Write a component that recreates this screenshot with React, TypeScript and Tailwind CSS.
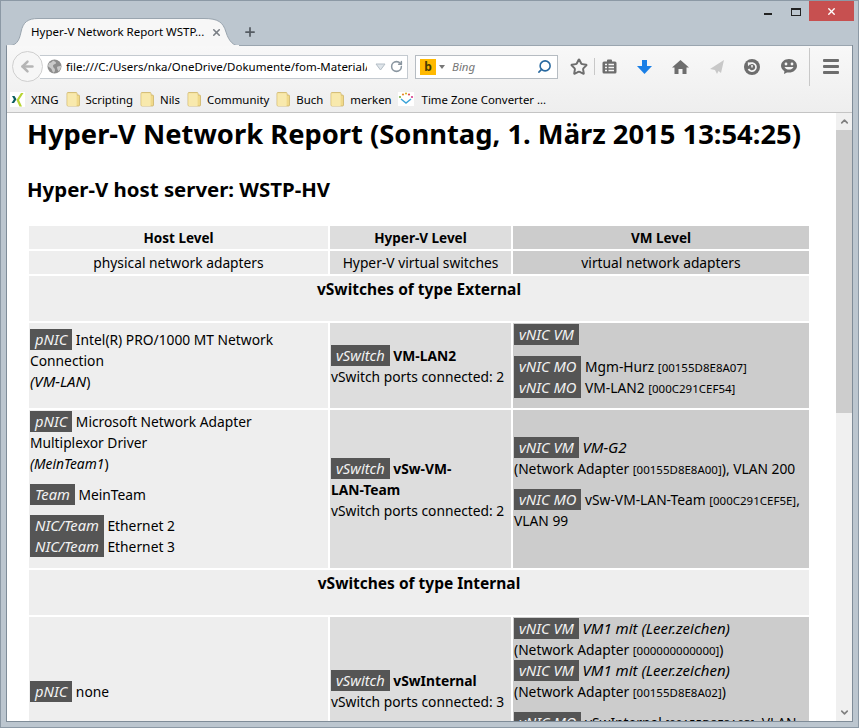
import { Plus, X, ArrowLeft, RotateCw, Search, Star, ChevronDown } from 'lucide-react';
import type { ReactNode } from 'react';

function Tag({ children }: { children: ReactNode }) {
  return <span className="inline-block h-[21px] bg-[#555555] px-[5px] align-top text-[14.7px] leading-[21px] italic text-[#f2f2f2]">{children}</span>;
}

function Mac({ children }: { children: ReactNode }) {
  return <span className="text-[11.5px] leading-none">[{children}]</span>;
}

function VmName({ children }: { children: ReactNode }) {
  return <i className="text-[15px] leading-none">{children}</i>;
}

function Folder() {
  return (
    <svg width="14" height="15" viewBox="0 0 14 15" className="shrink-0">
      <path d="M1 1.5a1 1 0 0 1 1-1h8a1 1 0 0 1 1 1v1.5h1.5a1 1 0 0 1 1 1v9a1 1 0 0 1-1 1H2a1 1 0 0 1-1-1z" fill="#f0d98a" stroke="#c9ad5c" strokeWidth="0.7" />
      <path d="M1.4 1.2h9.2v12.9H2.4a1 1 0 0 1-1-1z" fill="#f8e9ad" />
    </svg>
  );
}

function Bookmark({ label }: { label: string }) {
  return (
    <div className="flex items-center gap-[6px]">
      <Folder />
      <span>{label}</span>
    </div>
  );
}

export default function App() {
  return (
    <div className="flex h-[728px] w-[859px] flex-col overflow-hidden border border-[#8c99a5] bg-[#bcc6cf] px-[5px] pb-[5px] font-['Noto_Sans',sans-serif] text-black">
      {/* title bar + tabs */}
      <div className="-mx-[1px] flex h-[44px] shrink-0 flex-col">
        <div className="flex h-[20px] items-start justify-end">
          <div className="mr-[19px] mt-[12px] h-[2px] w-[8px] bg-[#222]" />
          <div className="mr-[8px] mt-[7px] h-[8px] w-[10px] border border-t-2 border-[#222]" />
          <div className="flex h-[20px] w-[45px] items-center justify-center bg-[#c75050]">
            <X size={11} strokeWidth={3} className="text-white" />
          </div>
        </div>
        <div className="flex h-[24px] items-end">
          <div className="relative z-10 -mb-[1px] ml-[1px] flex h-[28px] w-[234px] items-center pl-[25px] text-[11.5px]">
            <svg width="234" height="28" viewBox="0 0 234 28" className="absolute left-0 top-0">
              <path d="M0 28C10 28 13 24 15 14C17 4 22 0.5 32 0.5H198C212 0.5 217 4 220 14C223 24 228 28 234 28Z" fill="#f7f7f7" stroke="#9aa5af" />
              <path d="M1 28H233" stroke="#f7f7f7" strokeWidth="2" />
            </svg>
            <span className="relative w-[180px] whitespace-nowrap">Hyper-V Network Report WSTP...</span>
            <X size={11} strokeWidth={3.5} className="relative text-[#7a7f85]" />
          </div>
          <Plus size={14} strokeWidth={3} className="mb-[6px] ml-[3px] text-[#555c63]" />
        </div>
      </div>

      <div className="flex min-h-0 flex-1 flex-col border-x border-b border-[#7f8c98]">
        <div className="shrink-0 border-t border-[#9aa5af] bg-linear-to-b from-[#f8f8f8] to-[#eeeeee]">
          {/* nav bar */}
          <div className="flex h-[41px] items-center pl-[5px]">
            <div className="z-10 flex h-[31px] w-[31px] shrink-0 items-center justify-center rounded-full border border-[#cfcfcf] bg-[#f6f6f6]">
              <ArrowLeft size={17} strokeWidth={3.5} className="text-[#b5b5b5]" />
            </div>
            <div className="-ml-[3px] flex h-[24px] w-[368px] shrink-0 items-center border border-l-0 border-[#c4cad0] bg-white pl-[7px] text-[11.5px]">
              <svg width="15" height="15" viewBox="0 0 15 15" className="shrink-0">
                <circle cx="7.5" cy="7.5" r="7" fill="#8d8d8d" />
                <path d="M2 4c2 0 3-1 4-2.500c1 1 3 1 3 2.500s-3 1-3 3 2 2 2 4-1 2.500-2 2.500c-1-2-1-3-2-4S1.500 8 1 7z" fill="#c9c9c9" />
                <path d="M10 8c1-1 3-1 4-1 0 2-1 4-2.500 5.500C11 11 10 10 10 8z" fill="#c9c9c9" />
              </svg>
              <span className="ml-[4px] w-[301px] shrink-0 overflow-hidden whitespace-nowrap">file:///C:/Users/nka/OneDrive/Dokumente/fom-Material/</span>
              <svg width="11" height="8" viewBox="0 0 11 8" className="ml-[8px] shrink-0">
                <path d="M1 1h9L5.500 7z" fill="#dfe5ea" stroke="#b4bec6" />
              </svg>
              <RotateCw size={13} strokeWidth={2.8} className="ml-[4px] shrink-0 text-[#8a96a0]" />
            </div>
            <div className="ml-[7px] flex h-[24px] w-[143px] shrink-0 items-center border border-[#b6bcc2] bg-white pl-[4px] pr-[5px] text-[11.5px]">
              <div className="flex h-[16px] w-[16px] items-center justify-center bg-[#ffb900] text-[12px] leading-none font-bold text-[#4a3b00]">b</div>
              <svg width="6" height="4" viewBox="0 0 6 4" className="ml-[3px]">
                <path d="M0 0h6L3 4z" fill="#777777" />
              </svg>
              <span className="ml-[7px] flex-1 italic text-[#777]">Bing</span>
              <Search size={15} strokeWidth={2.5} className="-scale-x-100 text-[#27689f]" />
            </div>
            <Star size={18} strokeWidth={2.6} className="ml-[12px] shrink-0 text-[#6d6d6d]" />
            <div className="ml-[6px] h-[17px] w-px shrink-0 bg-[#c8c8c8]" />
            <svg width="15" height="15" viewBox="0 0 15 15" className="ml-[7px] shrink-0">
              <path d="M2 2.500h3V1.500a1 1 0 0 1 1-1h3a1 1 0 0 1 1 1v1h3a1.500 1.500 0 0 1 1.500 1.500v9A1.500 1.500 0 0 1 13 14.500H2A1.500 1.500 0 0 1 .5 13V4A1.500 1.500 0 0 1 2 2.500z" fill="#6d6d6d" />
              <path d="M3 5.500h2M6.500 5.500h5.500M3 8.500h2M6.500 8.500h5.500M3 11.500h2M6.500 11.500h5.500" stroke="#f5f5f5" strokeWidth="1.3" />
            </svg>
            <svg width="15" height="14" viewBox="0 0 15 14" className="ml-[20px] shrink-0">
              <path d="M5 0h5v6h5l-7.500 8L0 6h5z" fill="#1a7fe6" />
            </svg>
            <svg width="17" height="14" viewBox="0 0 17 14" className="ml-[20px] shrink-0">
              <path d="M8.500 0L17 7.500H14.500V14H10.500V9H6.500V14H2.500V7.500H0Z" fill="#6d6d6d" />
            </svg>
            <svg width="14" height="14" viewBox="0 0 14 14" className="ml-[21px] shrink-0">
              <path d="M14 0L0 9L5 10L7 14L8.500 11L11 13Z" fill="#c8c8c8" />
            </svg>
            <svg width="16" height="16" viewBox="0 0 16 16" className="ml-[20px] shrink-0">
              <circle cx="8" cy="8" r="8" fill="#6d6d6d" />
              <path d="M5.500 5A4 4 0 1 1 4.500 10" fill="none" stroke="#f5f5f5" strokeWidth="1.700" />
              <path d="M3.800 3.200L7.500 3.800L4 7.200Z" fill="#f5f5f5" />
              <path d="M8 6v2.500" stroke="#f5f5f5" strokeWidth="1.500" />
            </svg>
            <svg width="16" height="15" viewBox="0 0 16 15" className="ml-[21px] shrink-0">
              <path d="M8 0c4.400 0 8 2.900 8 6.800s-3.600 6.800-8 6.800c-.7 0-1.400-.1-2-.2L3 15l.4-2.800C1.300 11 0 9 0 6.800 0 2.900 3.600 0 8 0z" fill="#6d6d6d" />
              <circle cx="5" cy="5" r="1.400" fill="#f5f5f5" />
              <circle cx="11" cy="5" r="1.400" fill="#f5f5f5" />
              <path d="M3.500 8c1 1.800 2.600 2.600 4.500 2.600S11.500 9.800 12.500 8z" fill="#f5f5f5" />
            </svg>
            <div className="ml-[12px] h-[38px] w-px shrink-0 bg-[#c8c8c8]" />
            <div className="ml-[13px] flex shrink-0 flex-col gap-[3px]">
              <div className="h-[3px] w-[16px] rounded-[1px] bg-[#6d6d6d]" />
              <div className="h-[3px] w-[16px] rounded-[1px] bg-[#6d6d6d]" />
              <div className="h-[3px] w-[16px] rounded-[1px] bg-[#6d6d6d]" />
            </div>
          </div>

          {/* bookmarks */}
          <div className="flex h-[26px] items-center gap-[7px] border-b border-[#c4c4c4] pl-[3px] text-[11.4px]">
            <div className="flex items-center gap-[6px]">
              <svg width="15" height="15" viewBox="0 0 15 15" className="shrink-0">
                <rect width="15" height="15" fill="#ffffff" />
                <path d="M2 4h2.500l2 3.200L4 11H1.500l2.400-3.800z" fill="#0a5d5e" />
                <path d="M11 1h2.500L9 8l3 6.500H9.500L6.500 8z" fill="#b7d433" />
              </svg>
              <span>XING</span>
            </div>
            <Bookmark label="Scripting" />
            <Bookmark label="Nils" />
            <Bookmark label="Community" />
            <Bookmark label="Buch" />
            <Bookmark label="merken" />
            <div className="-ml-[1px] flex items-center gap-[8px]">
              <svg width="16" height="14" viewBox="0 0 16 14" className="shrink-0">
                <rect width="16" height="14" fill="#ffffff" />
                <path d="M3 7l5 4 5-4" fill="none" stroke="#3aa3d8" strokeWidth="1.500" />
                <circle cx="2" cy="5" r="1.100" fill="#7cb342" />
                <circle cx="5" cy="2.500" r="1.100" fill="#e8862c" />
                <circle cx="8" cy="1.500" r="1.100" fill="#d8b52c" />
                <circle cx="11" cy="2.500" r="1.100" fill="#e05050" />
                <circle cx="14" cy="5" r="1.100" fill="#d83c8c" />
              </svg>
              <span>Time Zone Converter ...</span>
            </div>
          </div>
        </div>

        {/* page */}
        <div className="flex min-h-0 flex-1 bg-white">
          <div className="min-w-0 flex-1 overflow-hidden pl-[20px]">
            <h1 className="mt-[2px] whitespace-nowrap text-[27.35px] leading-[38px] font-bold">Hyper-V Network Report (Sonntag, 1. März 2015 13:54:25)</h1>
            <h2 className="mt-[23px] whitespace-nowrap text-[20.4px] leading-[27px] font-bold">Hyper-V host server: WSTP-HV</h2>
            <div className="ml-[2px] mt-[23px] grid w-[780px] grid-cols-[299px_181px_296px] gap-[2px] text-[13.8px] leading-[21px]">
              <div className="flex h-[23px] items-center justify-center bg-[#eeeeee] pt-[1px] text-[13.5px] font-bold">Host Level</div>
              <div className="flex h-[23px] items-center justify-center bg-[#dddddd] pt-[1px] text-[13.5px] font-bold">Hyper-V Level</div>
              <div className="flex h-[23px] items-center justify-center bg-[#cccccc] pt-[1px] text-[13.5px] font-bold">VM Level</div>
              <div className="flex h-[23px] items-center justify-center bg-[#eeeeee]">physical network adapters</div>
              <div className="flex h-[23px] items-center justify-center bg-[#dddddd]">Hyper-V virtual switches</div>
              <div className="flex h-[23px] items-center justify-center bg-[#cccccc]">virtual network adapters</div>

              <div className="col-span-3 h-[45px] bg-[#eeeeee] pt-[3px] text-center text-[15.5px] font-bold">vSwitches of type External</div>

              <div className="h-[85px] bg-[#eeeeee] px-[1px] pt-[6px]">
                <div><Tag>pNIC</Tag> Intel(R) PRO/1000 MT Network Connection</div>
                <div><VmName>(VM-LAN</VmName>)</div>
              </div>
              <div className="flex flex-col justify-center bg-[#dddddd] px-[1px]">
                <div><Tag>vSwitch</Tag> <b>VM-LAN2</b></div>
                <div>vSwitch ports connected: 2</div>
              </div>
              <div className="bg-[#cccccc] px-[1px] pt-[1px]">
                <div className="mb-[11px]"><Tag>vNIC VM</Tag></div>
                <div><Tag>vNIC MO</Tag> Mgm-Hurz <Mac>00155D8E8A07</Mac></div>
                <div><Tag>vNIC MO</Tag> VM-LAN2 <Mac>000C291CEF54</Mac></div>
              </div>

              <div className="h-[158px] bg-[#eeeeee] px-[1px] pt-[1px]">
                <div><Tag>pNIC</Tag> Microsoft Network Adapter Multiplexor Driver</div>
                <div><i>(MeinTeam1</i>)</div>
                <div className="mt-[10px]"><Tag>Team</Tag> MeinTeam</div>
                <div className="mt-[10px]"><Tag>NIC/Team</Tag> Ethernet 2</div>
                <div><Tag>NIC/Team</Tag> Ethernet 3</div>
              </div>
              <div className="flex flex-col justify-center bg-[#dddddd] px-[1px]">
                <div><Tag>vSwitch</Tag> <b>vSw-VM-<br />LAN-Team</b></div>
                <div>vSwitch ports connected: 2</div>
              </div>
              <div className="flex flex-col justify-center bg-[#cccccc] px-[1px] pb-[10px]">
                <div><Tag>vNIC VM</Tag> <VmName>VM-G2</VmName></div>
                <div>(Network Adapter <Mac>00155D8E8A00</Mac>), VLAN 200</div>
                <div className="mt-[10px]"><Tag>vNIC MO</Tag> vSw-VM-LAN-Team <Mac>000C291CEF5E</Mac>, VLAN 99</div>
              </div>

              <div className="col-span-3 h-[45px] bg-[#eeeeee] pt-[3px] text-center text-[15.5px] font-bold">vSwitches of type Internal</div>

              <div className="flex h-[148px] flex-col justify-center bg-[#eeeeee] px-[1px]">
                <div><Tag>pNIC</Tag> none</div>
              </div>
              <div className="flex flex-col justify-center bg-[#dddddd] px-[1px]">
                <div><Tag>vSwitch</Tag> <b>vSwInternal</b></div>
                <div>vSwitch ports connected: 3</div>
              </div>
              <div className="bg-[#cccccc] px-[1px] pt-[1px]">
                <div><Tag>vNIC VM</Tag> <VmName>VM1 mit (Leer.zeichen)</VmName></div>
                <div>(Network Adapter <Mac>000000000000</Mac>)</div>
                <div><Tag>vNIC VM</Tag> <VmName>VM1 mit (Leer.zeichen)</VmName></div>
                <div>(Network Adapter <Mac>00155D8E8A02</Mac>)</div>
                <div className="mt-[10px]"><Tag>vNIC MO</Tag> vSwInternal <Mac>00155D8E8A03</Mac>, VLAN 10</div>
              </div>
            </div>
          </div>
          {/* scrollbar */}
          <div className="flex w-[16px] shrink-0 flex-col items-center bg-[#f0f0f0]">
            <div className="flex h-[17px] items-center">
              <ChevronDown size={11} strokeWidth={3.5} className="rotate-180 text-[#7f7f7f]" />
            </div>
            <div className="h-[283px] w-full bg-[#cdcdcd]" />
            <div className="flex-1" />
            <div className="flex h-[17px] items-center">
              <ChevronDown size={11} strokeWidth={3.5} className="text-[#7f7f7f]" />
            </div>
          </div>
        </div>
      </div>
    </div>
  );
}
